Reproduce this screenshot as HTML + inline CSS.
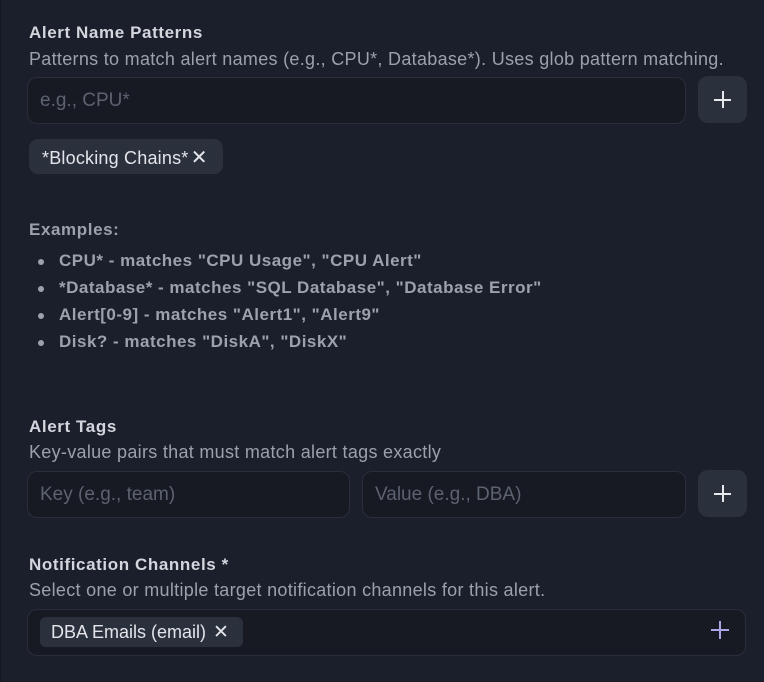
<!DOCTYPE html>
<html><head><meta charset="utf-8"><style>
*{box-sizing:border-box;margin:0;padding:0}
body{width:764px;height:682px;background:#1b1f2b;font-family:"Liberation Sans",sans-serif;position:relative;overflow:hidden}
.a{position:absolute;white-space:nowrap}
.t{font-weight:bold;font-size:17px;letter-spacing:0.6px;color:#d3d6dd;left:29px}
.d{font-size:18px;letter-spacing:0.3px;color:#9ba1ac;left:29px}
.in{position:absolute;background:#171a23;border:1px solid #2a2e3a;border-radius:10px;height:47px;font-size:19px;color:#5c6270;padding:12px 12px}
.btn{position:absolute;background:#2b303d;border-radius:10px;width:49px;height:47px}
.btn:before,.btn:after{content:"";position:absolute;background:#e6e8ec;left:16px;top:23px;width:17px;height:2px}
.btn:after{left:24px;top:15px;width:2px;height:17px}
.chip{position:absolute;background:#2b303d;border-radius:9px;color:#e3e5ea;font-size:18px}
.ex{font-weight:bold;font-size:17px;letter-spacing:0.5px;color:#9ca1ab;left:59px}
.dot{position:absolute;left:38px;width:6px;height:6px;border-radius:3px;background:#9ca1ab}
</style></head><body>
<div class="a" style="left:0;top:0;width:1px;height:682px;background:#14171f"></div>
<div class="a t" style="top:23px">Alert Name Patterns</div>
<div class="a d" style="top:49px">Patterns to match alert names (e.g., CPU*, Database*). Uses glob pattern matching.</div>
<div class="in" style="left:27px;top:77px;width:659px">e.g., CPU*</div>
<div class="btn" style="left:698px;top:76px"></div>
<div class="chip" style="left:29px;top:139px;width:194px;height:35px;padding:6px 0 0 13px;letter-spacing:0.2px">*Blocking Chains* <span style="font-size:20px;position:relative;top:0px;margin-left:-3px">✕</span></div>
<div class="a t" style="top:220px;color:#9ca1ab">Examples:</div>
<div class="dot" style="top:259px"></div><div class="a ex" style="top:251px">CPU* - matches "CPU Usage", "CPU Alert"</div>
<div class="dot" style="top:286px"></div><div class="a ex" style="top:278px">*Database* - matches "SQL Database", "Database Error"</div>
<div class="dot" style="top:313px"></div><div class="a ex" style="top:305px">Alert[0-9] - matches "Alert1", "Alert9"</div>
<div class="dot" style="top:340px"></div><div class="a ex" style="top:332px">Disk? - matches "DiskA", "DiskX"</div>
<div class="a t" style="top:417px">Alert Tags</div>
<div class="a d" style="top:442px">Key-value pairs that must match alert tags exactly</div>
<div class="in" style="left:27px;top:471px;width:323px">Key (e.g., team)</div>
<div class="in" style="left:362px;top:471px;width:324px">Value (e.g., DBA)</div>
<div class="btn" style="left:698px;top:470px"></div>
<div class="a t" style="top:555px">Notification Channels *</div>
<div class="a d" style="top:580px">Select one or multiple target notification channels for this alert.</div>
<div class="in" style="left:27px;top:609px;width:719px;padding:0"></div>
<div class="chip" style="left:40px;top:617px;width:203px;height:30px;padding:4px 0 0 11px;border-radius:6px">DBA Emails (email) <span style="font-size:19px;margin-left:2px">✕</span></div>
<div class="a" style="left:711px;top:629px;width:18px;height:2px;background:#a9a6e6"></div>
<div class="a" style="left:719px;top:621px;width:2px;height:18px;background:#a9a6e6"></div>
</body></html>
